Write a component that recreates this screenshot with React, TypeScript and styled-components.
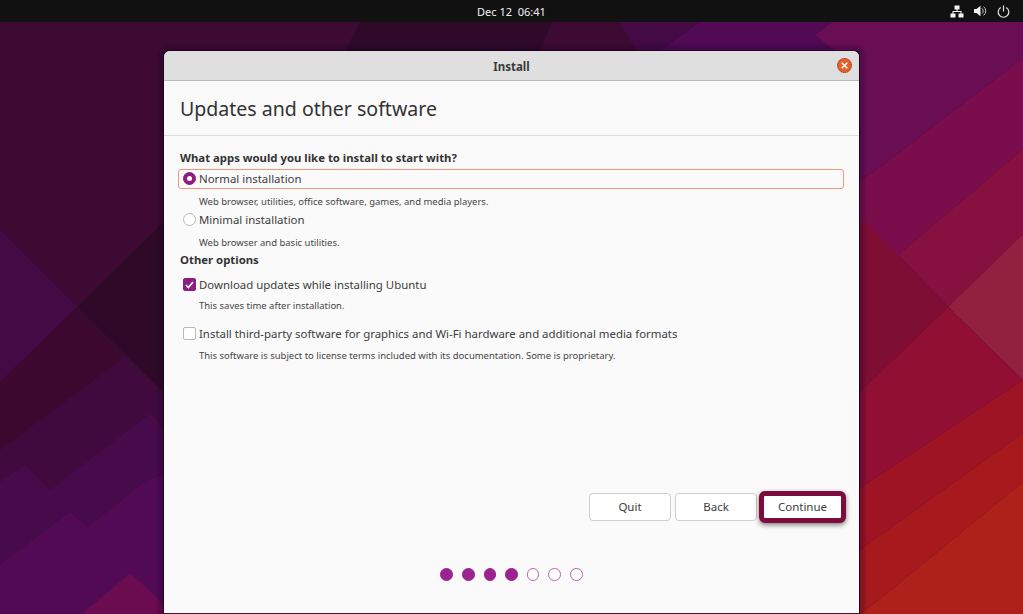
import styled, { createGlobalStyle } from 'styled-components';

const GlobalStyle = createGlobalStyle`
  html, body, #root {
    margin: 0;
    height: 100%;
    overflow: hidden;
  }
  body {
    font-family: "Noto Sans", "Open Sans", sans-serif;
    color: #3d3d3d;
    background: #3d0a33;
  }
`;

const Screen = styled.div`
  position: relative;
  display: flex;
  flex-direction: column;
  width: 1023px;
  height: 614px;
  overflow: hidden;
`;

const Wallpaper = styled.svg`
  position: absolute;
  inset: 0;
`;

const TopBar = styled.header`
  position: relative;
  display: grid;
  grid-template-columns: 1fr auto 1fr;
  align-items: center;
  flex: none;
  height: 22px;
  padding: 0 13px;
  background: #111111;
  color: #f2f2f2;
  font-size: 11px;
`;

const Clock = styled.div`
  grid-column: 2;
  white-space: pre;
`;

const Tray = styled.div`
  grid-column: 3;
  display: flex;
  justify-content: flex-end;
  align-items: center;
  gap: 10px;
`;

const Desktop = styled.main`
  position: relative;
  flex: 1;
  min-height: 0;
  padding: 29px 0 0 164px;
`;

const Window = styled.section`
  display: flex;
  flex-direction: column;
  box-sizing: border-box;
  width: 695px;
  height: 563px;
  background: #fafafa;
  border-radius: 6px 6px 0 0;
  border-bottom: 1px solid #4a1030;
  box-shadow: 0 0 0 1px rgba(20, 0, 15, 0.55), 0 0 3px 6px rgba(20, 0, 40, 0.22);
`;

const TitleBar = styled.div`
  position: relative;
  display: flex;
  align-items: center;
  justify-content: center;
  flex: none;
  box-sizing: border-box;
  height: 30px;
  padding-top: 1px;
  background: #dfdfdf;
  border-bottom: 1px solid #b9b9b9;
  border-radius: 6px 6px 0 0;
  font-size: 11.5px;
  font-weight: 700;
  color: #3a3a3a;
`;

const CloseButton = styled.button`
  position: absolute;
  top: 7px;
  right: 7px;
  display: flex;
  align-items: center;
  justify-content: center;
  box-sizing: border-box;
  width: 15px;
  height: 15px;
  padding: 0;
  background: #e2622c;
  border: 1px dotted #8c3a1a;
  border-radius: 50%;
`;

const PageHeader = styled.div`
  flex: none;
  box-sizing: border-box;
  height: 55px;
  padding: 11px 16px 0;
  border-bottom: 1px solid #dedede;
`;

const PageTitle = styled.h1`
  margin: 0;
  font-size: 19.55px;
  line-height: 33px;
  font-weight: 400;
  color: #333333;
`;

const Content = styled.div`
  flex: 1;
  display: flex;
  flex-direction: column;
  padding: 14px 16px 0;
`;

const GroupTitle = styled.div`
  height: 16px;
  line-height: 16px;
  font-size: 11.35px;
  font-weight: 700;
  color: #333333;
`;

const Option = styled.label<{ $focused?: boolean; $top: number }>`
  display: flex;
  align-items: center;
  gap: 3px;
  box-sizing: border-box;
  height: ${({ $focused }) => ($focused ? 20 : 18)}px;
  margin: ${({ $top }) => $top}px 0 0 -2px;
  width: 666px;
  padding: 0 0 1px 4px;
  border: 1px solid ${({ $focused }) => ($focused ? '#ee9a78' : 'transparent')};
  border-radius: 3px;
  font-size: 11.42px;
  color: #3d3d3d;
`;

const Radio = styled.span<{ $checked?: boolean }>`
  display: flex;
  align-items: center;
  justify-content: center;
  flex: none;
  box-sizing: border-box;
  width: 13px;
  height: 13px;
  border-radius: 50%;
  background: ${({ $checked }) => ($checked ? '#8c1d82' : '#ffffff')};
  border: 1px solid ${({ $checked }) => ($checked ? '#8c1d82' : '#b8b8b8')};
  &::after {
    content: '';
    display: ${({ $checked }) => ($checked ? 'block' : 'none')};
    width: 5px;
    height: 5px;
    border-radius: 50%;
    background: #ffffff;
  }
`;

const Checkbox = styled.span<{ $checked?: boolean }>`
  display: flex;
  align-items: center;
  justify-content: center;
  flex: none;
  box-sizing: border-box;
  width: 13px;
  height: 13px;
  border-radius: 2px;
  background: ${({ $checked }) => ($checked ? '#8c1d82' : '#ffffff')};
  border: 1px solid ${({ $checked }) => ($checked ? '#8c1d82' : '#b8b8b8')};
`;

const Description = styled.div<{ $top: number }>`
  height: 18px;
  line-height: 18px;
  margin: ${({ $top }) => $top}px 0 0 19px;
  font-size: 9.47px;
  color: #454545;
`;

const Actions = styled.div`
  display: flex;
  justify-content: flex-end;
  align-items: center;
  flex: none;
  height: 32px;
  padding-right: 13px;
`;

const ActionButton = styled.button<{ $gap?: number }>`
  box-sizing: border-box;
  width: 82px;
  height: 28px;
  margin-right: ${({ $gap }) => $gap ?? 0}px;
  padding: 0 0 1px;
  background: #ffffff;
  border: 1px solid #cfcfcf;
  border-radius: 4px;
  font-family: inherit;
  font-size: 11.5px;
  color: #3d3d3d;
`;

const ContinueButton = styled(ActionButton)`
  width: 87px;
  height: 32px;
  border: 5px solid #7d0c3e;
  border-radius: 6px;
  box-shadow: 0 2px 5px rgba(0, 0, 0, 0.5);
`;

const Steps = styled.div`
  display: flex;
  justify-content: center;
  flex: none;
  gap: 9px;
  margin: 45px 0 32px;
`;

const Step = styled.span<{ $done?: boolean }>`
  box-sizing: border-box;
  width: 12.6px;
  height: 12.6px;
  border-radius: 50%;
  background: ${({ $done }) => ($done ? '#9b2490' : '#ffffff')};
  border: 1.4px solid ${({ $done }) => ($done ? '#9b2490' : '#b768ad')};
`;

const polygons: [string, string][] = [
  // left half
  ['#3d0a33', '0,22 640,22 640,614 0,614'],
  ['#430a45', '0,230 77,307 0,382'],
  ['#2f0a28', '77,307 164,221 164,393'],
  ['#2f0a28', '345,51 360,22 552,22 540,51'],
  ['#3d0830', '0,382 77,307 125,357 0,450'],
  ['#410a3e', '0,482 0,450 125,357 164,393 164,440 150,414 50,490 25,465'],
  ['#470b4c', '0,565 0,482 25,465 50,490 150,414 175,440 175,470 147,480 88,527 70,512'],
  ['#520a55', '0,614 0,565 70,512 88,527 147,480 175,470 175,614'],
  ['#6a0c4f', '82,614 130,573 160,600 170,614'],
  // top strip
  ['#430a45', '620,22 700,22 660,51 636,51'],
  ['#520a55', '660,51 700,22 832,22 815,35 835,51'],
  // right half
  ['#690d55', '832,22 1023,22 1023,58 875,171 860,180 860,51 835,51 815,35'],
  ['#7a0d4c', '860,180 875,171 1023,58 1023,149 898,255 860,280'],
  ['#86103f', '860,280 898,255 1023,149 1023,234 948,307 865,221 860,221'],
  ['#92213f', '948,307 1023,234 1023,380'],
  ['#7f0e35', '860,221 865,221 948,307 865,387 860,392'],
  ['#900f32', '860,392 865,387 948,307 1023,380 875,478 860,488'],
  ['#9e1424', '860,488 875,478 1023,380 1023,433 875,539 860,550'],
  ['#a61a1e', '860,550 875,539 1023,433 1023,482 875,603 860,614'],
  ['#ae211a', '860,614 875,603 1023,482 1023,614'],
];

function NetworkIcon() {
  return (
    <svg width="14" height="13" viewBox="0 0 14 13" fill="#f2f2f2">
      <rect x="4.5" y="0.5" width="5" height="4" />
      <rect x="0.5" y="8.5" width="5" height="4" />
      <rect x="8.5" y="8.5" width="5" height="4" />
      <path d="M6.5 4h1v2H11.5V9h-1V7h-7v2h-1V6h4z" />
    </svg>
  );
}

function VolumeIcon() {
  return (
    <svg width="13" height="12" viewBox="0 0 13 12" fill="none">
      <path d="M0 4h2.5L6.5 .8v10.4L2.5 8H0z" fill="#f2f2f2" />
      <path d="M8 3.4a3.4 3.4 0 0 1 0 5.2M9.6 1.6a5.6 5.6 0 0 1 0 8.8" stroke="#c8c8c8" strokeWidth="1" />
    </svg>
  );
}

function PowerIcon() {
  return (
    <svg width="13" height="13" viewBox="0 0 13 13" fill="none" stroke="#e4e4e4" strokeWidth="1.2">
      <path d="M6.5 .5v6" />
      <path d="M3.8 2.4a5.3 5.3 0 1 0 5.4 0" />
    </svg>
  );
}

export default function App() {
  const steps = [true, true, true, true, false, false, false];

  return (
    <Screen>
      <GlobalStyle />
      <Wallpaper width="1023" height="614" viewBox="0 0 1023 614">
        {polygons.map(([fill, points]) => (
          <polygon key={points} fill={fill} points={points} />
        ))}
      </Wallpaper>

      <TopBar>
        <Clock>Dec 12  06:41</Clock>
        <Tray>
          <NetworkIcon />
          <VolumeIcon />
          <PowerIcon />
        </Tray>
      </TopBar>

      <Desktop>
        <Window>
          <TitleBar>
            Install
            <CloseButton aria-label="Close">
              <svg width="7" height="7" viewBox="0 0 7 7" stroke="#fff" strokeWidth="1.4">
                <path d="M.7.7l5.6 5.6M6.3.7L.7 6.3" />
              </svg>
            </CloseButton>
          </TitleBar>

          <PageHeader>
            <PageTitle>Updates and other software</PageTitle>
          </PageHeader>

          <Content>
            <GroupTitle>What apps would you like to install to start with?</GroupTitle>
            <Option $focused $top={3}>
              <Radio $checked />
              Normal installation
            </Option>
            <Description $top={4}>Web browser, utilities, office software, games, and media players.</Description>
            <Option $top={0}>
              <Radio />
              Minimal installation
            </Option>
            <Description $top={5}>Web browser and basic utilities.</Description>
            <GroupTitle>Other options</GroupTitle>
            <Option $top={8}>
              <Checkbox $checked>
                <svg width="9" height="8" viewBox="0 0 9 8" fill="none" stroke="#fff" strokeWidth="1.6">
                  <path d="M1 4l2.4 2.6L8 1" />
                </svg>
              </Checkbox>
              Download updates while installing Ubuntu
            </Option>
            <Description $top={3}>This saves time after installation.</Description>
            <Option $top={10}>
              <Checkbox />
              Install third-party software for graphics and Wi-Fi hardware and additional media formats
            </Option>
            <Description $top={4}>This software is subject to license terms included with its documentation. Some is proprietary.</Description>
          </Content>

          <Actions>
            <ActionButton $gap={4}>Quit</ActionButton>
            <ActionButton $gap={2}>Back</ActionButton>
            <ContinueButton>Continue</ContinueButton>
          </Actions>

          <Steps>
            {steps.map((done, i) => (
              <Step key={i} $done={done} />
            ))}
          </Steps>
        </Window>
      </Desktop>
    </Screen>
  );
}
